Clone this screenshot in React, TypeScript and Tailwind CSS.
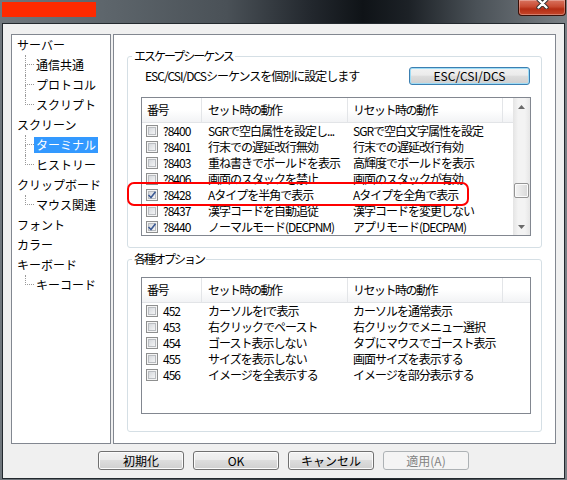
// Settings dialog (Win7 style) — terminal escape sequence options page
import React from "react"

type Row = { id: string; set: string; reset: string; on: boolean }

const escRows: Row[] = [
  { id: "?8400", set: "SGRで空白属性を設定し...", reset: "SGRで空白文字属性を設定", on: false },
  { id: "?8401", set: "行末での遅延改行無効", reset: "行末での遅延改行有効", on: false },
  { id: "?8403", set: "重ね書きでボールドを表示", reset: "高輝度でボールドを表示", on: false },
  { id: "?8406", set: "画面のスタックを禁止", reset: "画面のスタックが有効", on: false },
  { id: "?8428", set: "Aタイプを半角で表示", reset: "Aタイプを全角で表示", on: true },
  { id: "?8437", set: "漢字コードを自動追従", reset: "漢字コードを変更しない", on: false },
  { id: "?8440", set: "ノーマルモード(DECPNM)", reset: "アプリモード(DECPAM)", on: true },
]

const optRows: Row[] = [
  { id: "452", set: "カーソルをIで表示", reset: "カーソルを通常表示", on: false },
  { id: "453", set: "右クリックでペースト", reset: "右クリックでメニュー選択", on: false },
  { id: "454", set: "ゴースト表示しない", reset: "タブにマウスでゴースト表示", on: false },
  { id: "455", set: "サイズを表示しない", reset: "画面サイズを表示する", on: false },
  { id: "456", set: "イメージを全表示する", reset: "イメージを部分表示する", on: false },
]

const tree = [
  { label: "サーバー", children: ["通信共通", "プロトコル", "スクリプト"] },
  { label: "スクリーン", children: ["ターミナル", "ヒストリー"] },
  { label: "クリップボード", children: ["マウス関連"] },
  { label: "フォント", children: [] as string[] },
  { label: "カラー", children: [] as string[] },
  { label: "キーボード", children: ["キーコード"] },
]

function Checkbox({ on }: { on: boolean }) {
  return (
    <div className="flex h-[12px] w-[12px] shrink-0 border border-[#8e8f8f] bg-[#f4f4f4] p-[1px]">
      <div className="relative flex h-full w-full items-center justify-center border border-[#b9bcc0] bg-[linear-gradient(135deg,#d5d8dc,#f3f4f5)]">
        {on && (
          <svg width="10" height="10" viewBox="0 0 10 10" className="absolute">
            <path d="M1.5 5 L4 7.5 L8.5 1.8" fill="none" stroke="#3c5a94" strokeWidth="1.6" />
          </svg>
        )}
      </div>
    </div>
  )
}

function Arrow({ up }: { up: boolean }) {
  return (
    <svg width="7" height="4" viewBox="0 0 7 4">
      <polygon points={up ? "0,4 7,4 3.5,0" : "0,0 7,0 3.5,4"} fill="#6a6a6a" />
    </svg>
  )
}

function Scrollbar() {
  return (
    <div className="flex w-[17px] shrink-0 flex-col bg-[linear-gradient(90deg,#e4e4e4,#f3f3f3_30%,#f3f3f3_70%,#e6e6e6)]">
      <div className="flex h-[17px] items-center justify-center">
        <Arrow up />
      </div>
      <div className="flex-1 pt-[68px]">
        <div className="mx-[1px] h-[15px] rounded-[2px] border border-[#959595] bg-[linear-gradient(90deg,#f4f4f4,#e6e6e6_50%,#d8d8d8)] shadow-[inset_0_0_0_1px_#fbfbfb]" />
      </div>
      <div className="flex h-[17px] items-center justify-center">
        <Arrow up={false} />
      </div>
    </div>
  )
}

function ListView({ rows, scroll, extra }: { rows: Row[]; scroll?: boolean; extra?: boolean }) {
  return (
    <div className="ml-[13px] flex w-[390px] border border-[#828790] bg-white">
      <div className="flex min-w-0 flex-1 flex-col">
        <div className="flex h-[25px] shrink-0 border-b border-[#e2e4e7] bg-[linear-gradient(#ffffff,#ffffff_50%,#f2f3f5)] tracking-[-1.5px]">
          <div className="flex w-[60px] shrink-0 items-center border-r border-[#e3e5e8] pl-[5px]">番号</div>
          <div className="flex w-[146px] shrink-0 items-center border-r border-[#e3e5e8] pl-[6px]">セット時の動作</div>
          <div className="flex w-[155px] shrink-0 items-center border-r border-[#e3e5e8] pl-[5px]">リセット時の動作</div>
          <div className="flex-1" />
        </div>
        {rows.map((r) => (
          <div key={r.id} className="flex h-[16px] items-center tracking-[-1px]">
            <div className="flex w-[60px] shrink-0 items-center gap-[5px] pl-[4px]">
              <Checkbox on={r.on} />
              <span>{r.id}</span>
            </div>
            <div className="w-[146px] shrink-0 overflow-hidden whitespace-nowrap pl-[6px]">{r.set}</div>
            <div className="w-[155px] shrink-0 overflow-hidden whitespace-nowrap pl-[5px]">{r.reset}</div>
          </div>
        ))}
        {extra ? <div className="h-[30px]" /> : null}
      </div>
      {scroll && <Scrollbar />}
    </div>
  )
}

function Button({ children, focus, disabled }: { children: React.ReactNode; focus?: boolean; disabled?: boolean }) {
  if (disabled) {
    return (
      <button className="flex h-[19px] w-[86px] items-center justify-center rounded-[3px] border border-[#adb2b5] bg-[#f4f4f4] text-[#838383]">
        {children}
      </button>
    )
  }
  return (
    <button
      className={
        focus
          ? "flex h-[18px] w-[121px] items-center justify-center rounded-[3px] border border-[#3c7fb1] bg-[linear-gradient(#f2f2f2,#ebebeb_45%,#dddddd_50%,#cfcfcf)] shadow-[inset_0_0_0_1px_#9edcf6]"
          : "flex h-[19px] w-[86px] items-center justify-center rounded-[3px] border border-[#707070] bg-[linear-gradient(#f2f2f2,#ebebeb_45%,#dddddd_50%,#cfcfcf)] shadow-[inset_0_0_0_1px_#fbfbfb]"
      }
    >
      {children}
    </button>
  )
}

function Tree() {
  return (
    <div className="flex h-[410px] w-[100px] shrink-0 flex-col border border-[#828790] bg-white">
      {tree.map((node) => (
        <div key={node.label}>
          <div className="flex h-[20px] items-center">
            <span className="ml-[3px] px-[2px] leading-[16px]">{node.label}</span>
          </div>
          {node.children.map((c, i) => {
            const last = i === node.children.length - 1
            const sel = c === "ターミナル"
            return (
              <div key={c} className="flex h-[20px] items-center">
                <div className="w-[13px] shrink-0" />
                <div className="flex h-full w-[9px] shrink-0 flex-col">
                  <div className="h-[10px] border-b border-l border-dotted border-[#9a9a9a]" />
                  <div className={last ? "flex-1" : "flex-1 border-l border-dotted border-[#9a9a9a]"} />
                </div>
                <span className={sel ? "bg-[#3399ff] px-[2px] leading-[16px] text-white" : "px-[2px] leading-[16px]"}>{c}</span>
              </div>
            )
          })}
        </div>
      ))}
    </div>
  )
}

export default function App() {
  return (
    <div className="relative h-[480px] w-[567px] overflow-hidden bg-[linear-gradient(90deg,#70777d_0%,#5e666c_18%,#4a5157_40%,#22272d_55%,#0f1317_64%,#1c2126_72%,#4a5157_84%,#7a8085_100%)] font-['Noto_Sans_CJK_JP','Noto_Sans',sans-serif] text-[12px] leading-[16px] text-black">
      {/* title bar */}
      <div className="flex h-[23px] items-start justify-between">
        <div className="ml-[2px] mt-[2px] h-[15px] w-[94px] bg-[#ff2a00]" />
        <div className="mr-[1px] flex h-[16px] w-[48px] justify-center overflow-hidden rounded-b-[4px] border border-t-0 border-[#3a1008] bg-[linear-gradient(#d9735f,#c84a31_45%,#b42d14_60%,#c5472c)] shadow-[inset_0_0_0_1px_rgba(255,255,255,0.3)]">
          <svg width="13" height="11" viewBox="0 0 13 11" className="-mt-[2px]">
            <path d="M2.5 1.5 L10.5 9.5 M10.5 1.5 L2.5 9.5" stroke="#2d2d2d" strokeWidth="4.2" strokeLinecap="round" />
            <path d="M2.5 1.5 L10.5 9.5 M10.5 1.5 L2.5 9.5" stroke="#ffffff" strokeWidth="2.4" strokeLinecap="round" />
          </svg>
        </div>
      </div>

      {/* dialog body */}
      <div className="ml-[2px] flex h-[456px] w-[563px] flex-col border border-[#23292e] bg-[#f0f0f0] px-[8px] pt-[10px] pb-[8px]">
        <div className="flex gap-[2px]">
          <Tree />
          <div className="flex h-[410px] w-[443px] flex-col border border-[#828790] bg-white pl-[13px]">
            <fieldset className="mt-[13px] w-[415px] rounded-[3px] border border-[#d5dfe5] pb-[11px]">
              <legend className="ml-[4px] px-[2px] leading-[16px] tracking-[-2px]">エスケープシーケンス</legend>
              <div className="mt-[3px] flex h-[18px] items-center justify-between pl-[17px] pr-[11px]">
                <span className="tracking-[-1px]">ESC/CSI/DCSシーケンスを個別に設定します</span>
                <Button focus>ESC/CSI/DCS</Button>
              </div>
              <div className="mt-[12px]">
                <ListView rows={escRows} scroll />
              </div>
            </fieldset>
            <fieldset className="mt-[3px] w-[415px] rounded-[3px] border border-[#d5dfe5] pb-[17px]">
              <legend className="ml-[4px] px-[2px] leading-[16px] tracking-[-2px]">各種オプション</legend>
              <div className="mt-[10px]">
                <ListView rows={optRows} extra />
              </div>
            </fieldset>
          </div>
        </div>
        <div className="mt-[7px] flex justify-center gap-[9px]">
          <Button>初期化</Button>
          <Button>OK</Button>
          <Button>キャンセル</Button>
          <Button disabled>適用(A)</Button>
        </div>
      </div>

      {/* red annotation around the ?8428 row */}
      <div className="absolute left-[127px] top-[182px] h-[24px] w-[342px] rounded-[7px] border-[2.5px] border-[#ff0000]" />
    </div>
  )
}
